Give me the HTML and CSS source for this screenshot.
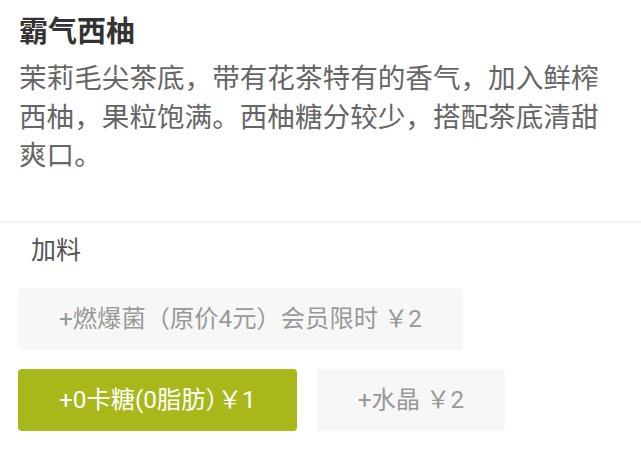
FILE: index.html
```html
<!DOCTYPE html>
<html lang="zh-CN">
<head>
<meta charset="utf-8">
<link rel="stylesheet" href="styles.css">
</head>
<body>
<div class="page">
  <section class="info">
    <h1 class="title">霸气西柚</h1>
    <p class="desc">茉莉毛尖茶底，带有花茶特有的香气，加入鲜榨西柚，果粒饱满。西柚糖分较少，搭配茶底清甜爽口。</p>
  </section>
  <section class="addons">
    <div class="label">加料</div>
    <div class="options">
      <button class="opt">+燃爆菌（原价4元）会员限时 ￥2</button>
      <button class="opt active">+0卡糖(0脂肪<span class="half">）</span>￥1</button>
      <button class="opt">+水晶 ￥2</button>
    </div>
  </section>
</div>
</body>
</html>
```
FILE: styles.css
```css
html, body {
  margin: 0;
  padding: 0;
  background: #fff;
}
body {
  font-family: Roboto, "Noto Sans CJK SC", sans-serif;
  width: 641px;
  height: 465px;
  overflow: hidden;
}
.info {
  padding: 14px 19px 0 19px;
  height: 207px;
  border-bottom: 2px solid #f3f3f3;
}
.title {
  margin: 0;
  font-size: 29px;
  line-height: 36px;
  font-weight: 700;
  color: #333;
}
.desc {
  margin: 10px 0 0 0;
  font-size: 27.6px;
  line-height: 38.5px;
  color: #666;
  width: 600px;
}
.addons {
  padding: 12px 18px 0 18px;
}
.label {
  padding-left: 13px;
  font-size: 25px;
  line-height: 32px;
  color: #555;
}
.options {
  margin-top: 21px;
  display: flex;
  flex-wrap: wrap;
  gap: 19px 20px;
  width: 500px;
}
.opt {
  font-family: inherit;
  height: 62px;
  padding: 0 41px;
  border: none;
  border-radius: 4px;
  background: #f7f7f7;
  color: #999;
  font-size: 24.3px;
  line-height: 62px;
  white-space: nowrap;
}
.opt.active {
  background: #a8b81a;
  color: #fff;
}
.half {
  font-feature-settings: "halt";
}
```
